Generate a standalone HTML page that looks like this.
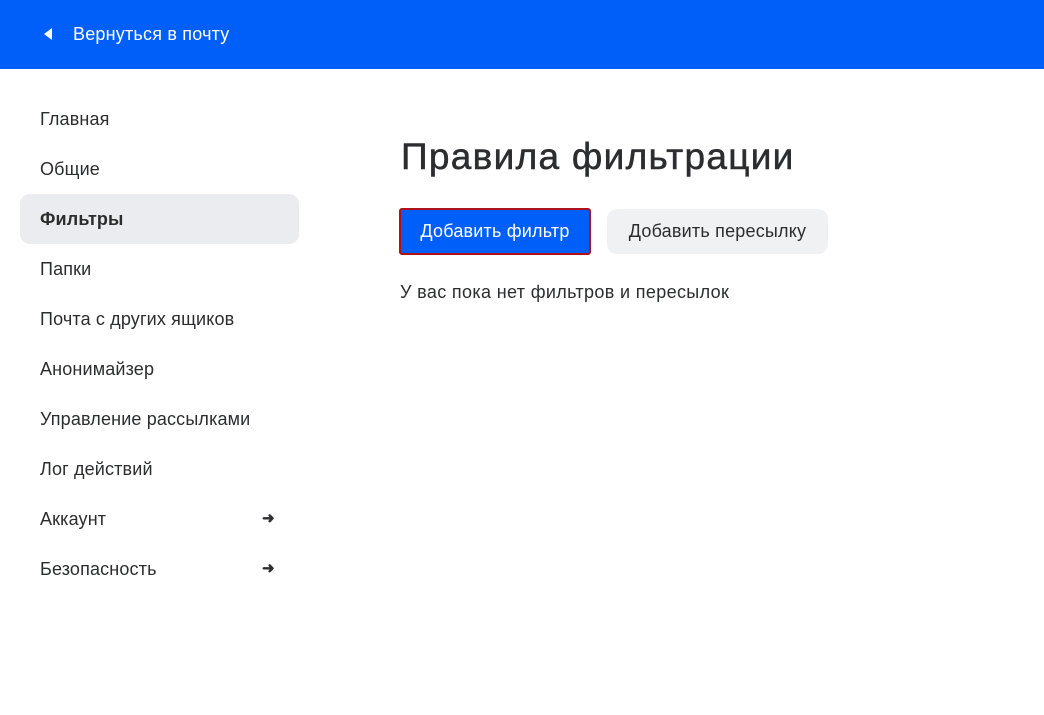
<!DOCTYPE html>
<html><head><meta charset="utf-8"><style>
body{margin:0;width:1044px;height:715px;background:#fff;font-family:"Liberation Sans",Arial,sans-serif;color:#2c2d2e;position:relative;overflow:hidden}
.top{position:absolute;left:0;top:0;width:1044px;height:69px;background:#005ff9;color:#fff}
.top .arr{position:absolute;left:44px;top:28px;width:0;height:0;border-top:6px solid transparent;border-bottom:6px solid transparent;border-right:8px solid #fff}
.top .t{position:absolute;left:73px;top:24px;font-size:18px;letter-spacing:0.2px}
.nav div{position:absolute;left:40px;font-size:18px;letter-spacing:0.15px}
.sel{position:absolute;left:20px;top:194px;width:279px;height:50px;background:#ebecef;border-radius:10px}
.ar{position:absolute;left:262px;font-size:15px;font-weight:bold}
h1{position:absolute;left:401px;top:136px;margin:0;font-size:37px;font-weight:normal;letter-spacing:1.3px;-webkit-text-stroke:0.5px #2c2d2e}
.b1{position:absolute;left:399px;top:208px;background:#005ff9;border:2px solid #b0121b;border-radius:3px;color:#fff;font-size:18px;text-align:center;line-height:43px;width:188px;height:43px;letter-spacing:0.2px}
.b2{position:absolute;left:607px;top:209px;width:221px;height:45px;background:#f0f1f3;border-radius:10px;font-size:18px;text-align:center;line-height:45px;letter-spacing:0.2px}
.msg{position:absolute;left:400px;top:282px;font-size:18px;letter-spacing:0.35px}
</style></head><body>
<div class="top"><div class="arr"></div><div class="t">Вернуться в почту</div></div>
<div class="sel"></div>
<div class="nav">
<div style="top:109px">Главная</div>
<div style="top:159px">Общие</div>
<div style="top:209px;font-weight:bold">Фильтры</div>
<div style="top:259px">Папки</div>
<div style="top:309px">Почта с других ящиков</div>
<div style="top:359px">Анонимайзер</div>
<div style="top:409px">Управление рассылками</div>
<div style="top:459px">Лог действий</div>
<div style="top:509px">Аккаунт</div>
<div style="top:559px">Безопасность</div>
</div>
<div class="ar" style="top:509px">➜</div>
<div class="ar" style="top:559px">➜</div>
<h1>Правила фильтрации</h1>
<div class="b1">Добавить фильтр</div>
<div class="b2">Добавить пересылку</div>
<div class="msg">У вас пока нет фильтров и пересылок</div>
</body></html>
